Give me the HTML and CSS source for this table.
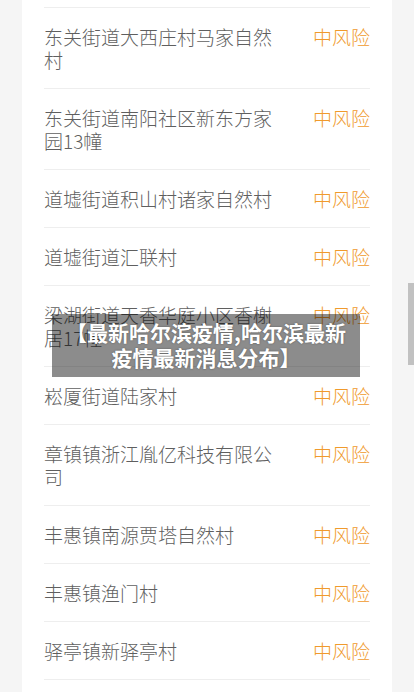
FILE: index.html
```html
<!DOCTYPE html>
<html>
<head>
    <meta charset="UTF-8">
    <meta name="viewport" content="width=device-width, initial-scale=1.0">
    <title>最新哈尔滨疫情</title>
    <link rel="stylesheet" href="styles.css">
</head>
<body>
<!-- Risk area list -->
<div class="card">
    <div class="list-top"></div>
    <ul class="risk-list">
        <li><span class="place">东关街道大西庄村马家自然村</span><span class="level">中风险</span></li>
        <li><span class="place">东关街道南阳社区新东方家园13幢</span><span class="level">中风险</span></li>
        <li><span class="place">道墟街道积山村诸家自然村</span><span class="level">中风险</span></li>
        <li><span class="place">道墟街道汇联村</span><span class="level">中风险</span></li>
        <li><span class="place">梁湖街道天香华庭小区香榭居17幢</span><span class="level">中风险</span></li>
        <li><span class="place">崧厦街道陆家村</span><span class="level">中风险</span></li>
        <li><span class="place">章镇镇浙江胤亿科技有限公司</span><span class="level">中风险</span></li>
        <li><span class="place">丰惠镇南源贾塔自然村</span><span class="level">中风险</span></li>
        <li><span class="place">丰惠镇渔门村</span><span class="level">中风险</span></li>
        <li><span class="place">驿亭镇新驿亭村</span><span class="level">中风险</span></li>
    </ul>
</div>

<!-- Title overlay -->
<div class="title-box">【最新哈尔滨疫情,哈尔滨最新疫情最新消息分布】</div>

<!-- Scrollbar thumb -->
<div class="scroll-thumb"></div>
</body>
</html>
```

FILE: styles.css
```css
html, body {
    height: 100%;
    margin: 0;
    overflow: hidden;
}

body {
    background-color: #f5f5f5;
    font-family: "Noto Sans CJK SC", "Noto Sans", sans-serif;
}

/* White card holding the list */
.card {
    margin: 0 22px;
    background-color: #fff;
    padding: 0 22px 20px;
}

.list-top {
    height: 7px;
    border-bottom: 1px solid #eee;
}

.risk-list {
    list-style: none;
    margin: 0;
    padding: 0;
}

.risk-list li {
    display: flex;
    justify-content: space-between;
    align-items: flex-start;
    padding: 17px 0;
    border-bottom: 1px solid #eee;
    font-size: 19px;
    font-weight: 300;
    line-height: 23px;
}

.place {
    width: 236px;
    color: #5f5f5f;
}

.level {
    color: #f09a2c;
}

/* Title overlay */
.title-box {
    position: absolute;
    left: 52px;
    top: 314px;
    width: 308px;
    height: 63px;
    box-sizing: border-box;
    padding: 6px 10px;
    background-color: rgba(0, 0, 0, 0.45);
    color: #fff;
    font-size: 21px;
    font-weight: bold;
    line-height: 25px;
    text-align: center;
    text-shadow: 0 0 2px rgba(0, 0, 0, 0.4);
}

.scroll-thumb {
    position: absolute;
    right: 0;
    top: 283px;
    width: 6px;
    height: 82px;
    background-color: #c1c1c1;
}
```
